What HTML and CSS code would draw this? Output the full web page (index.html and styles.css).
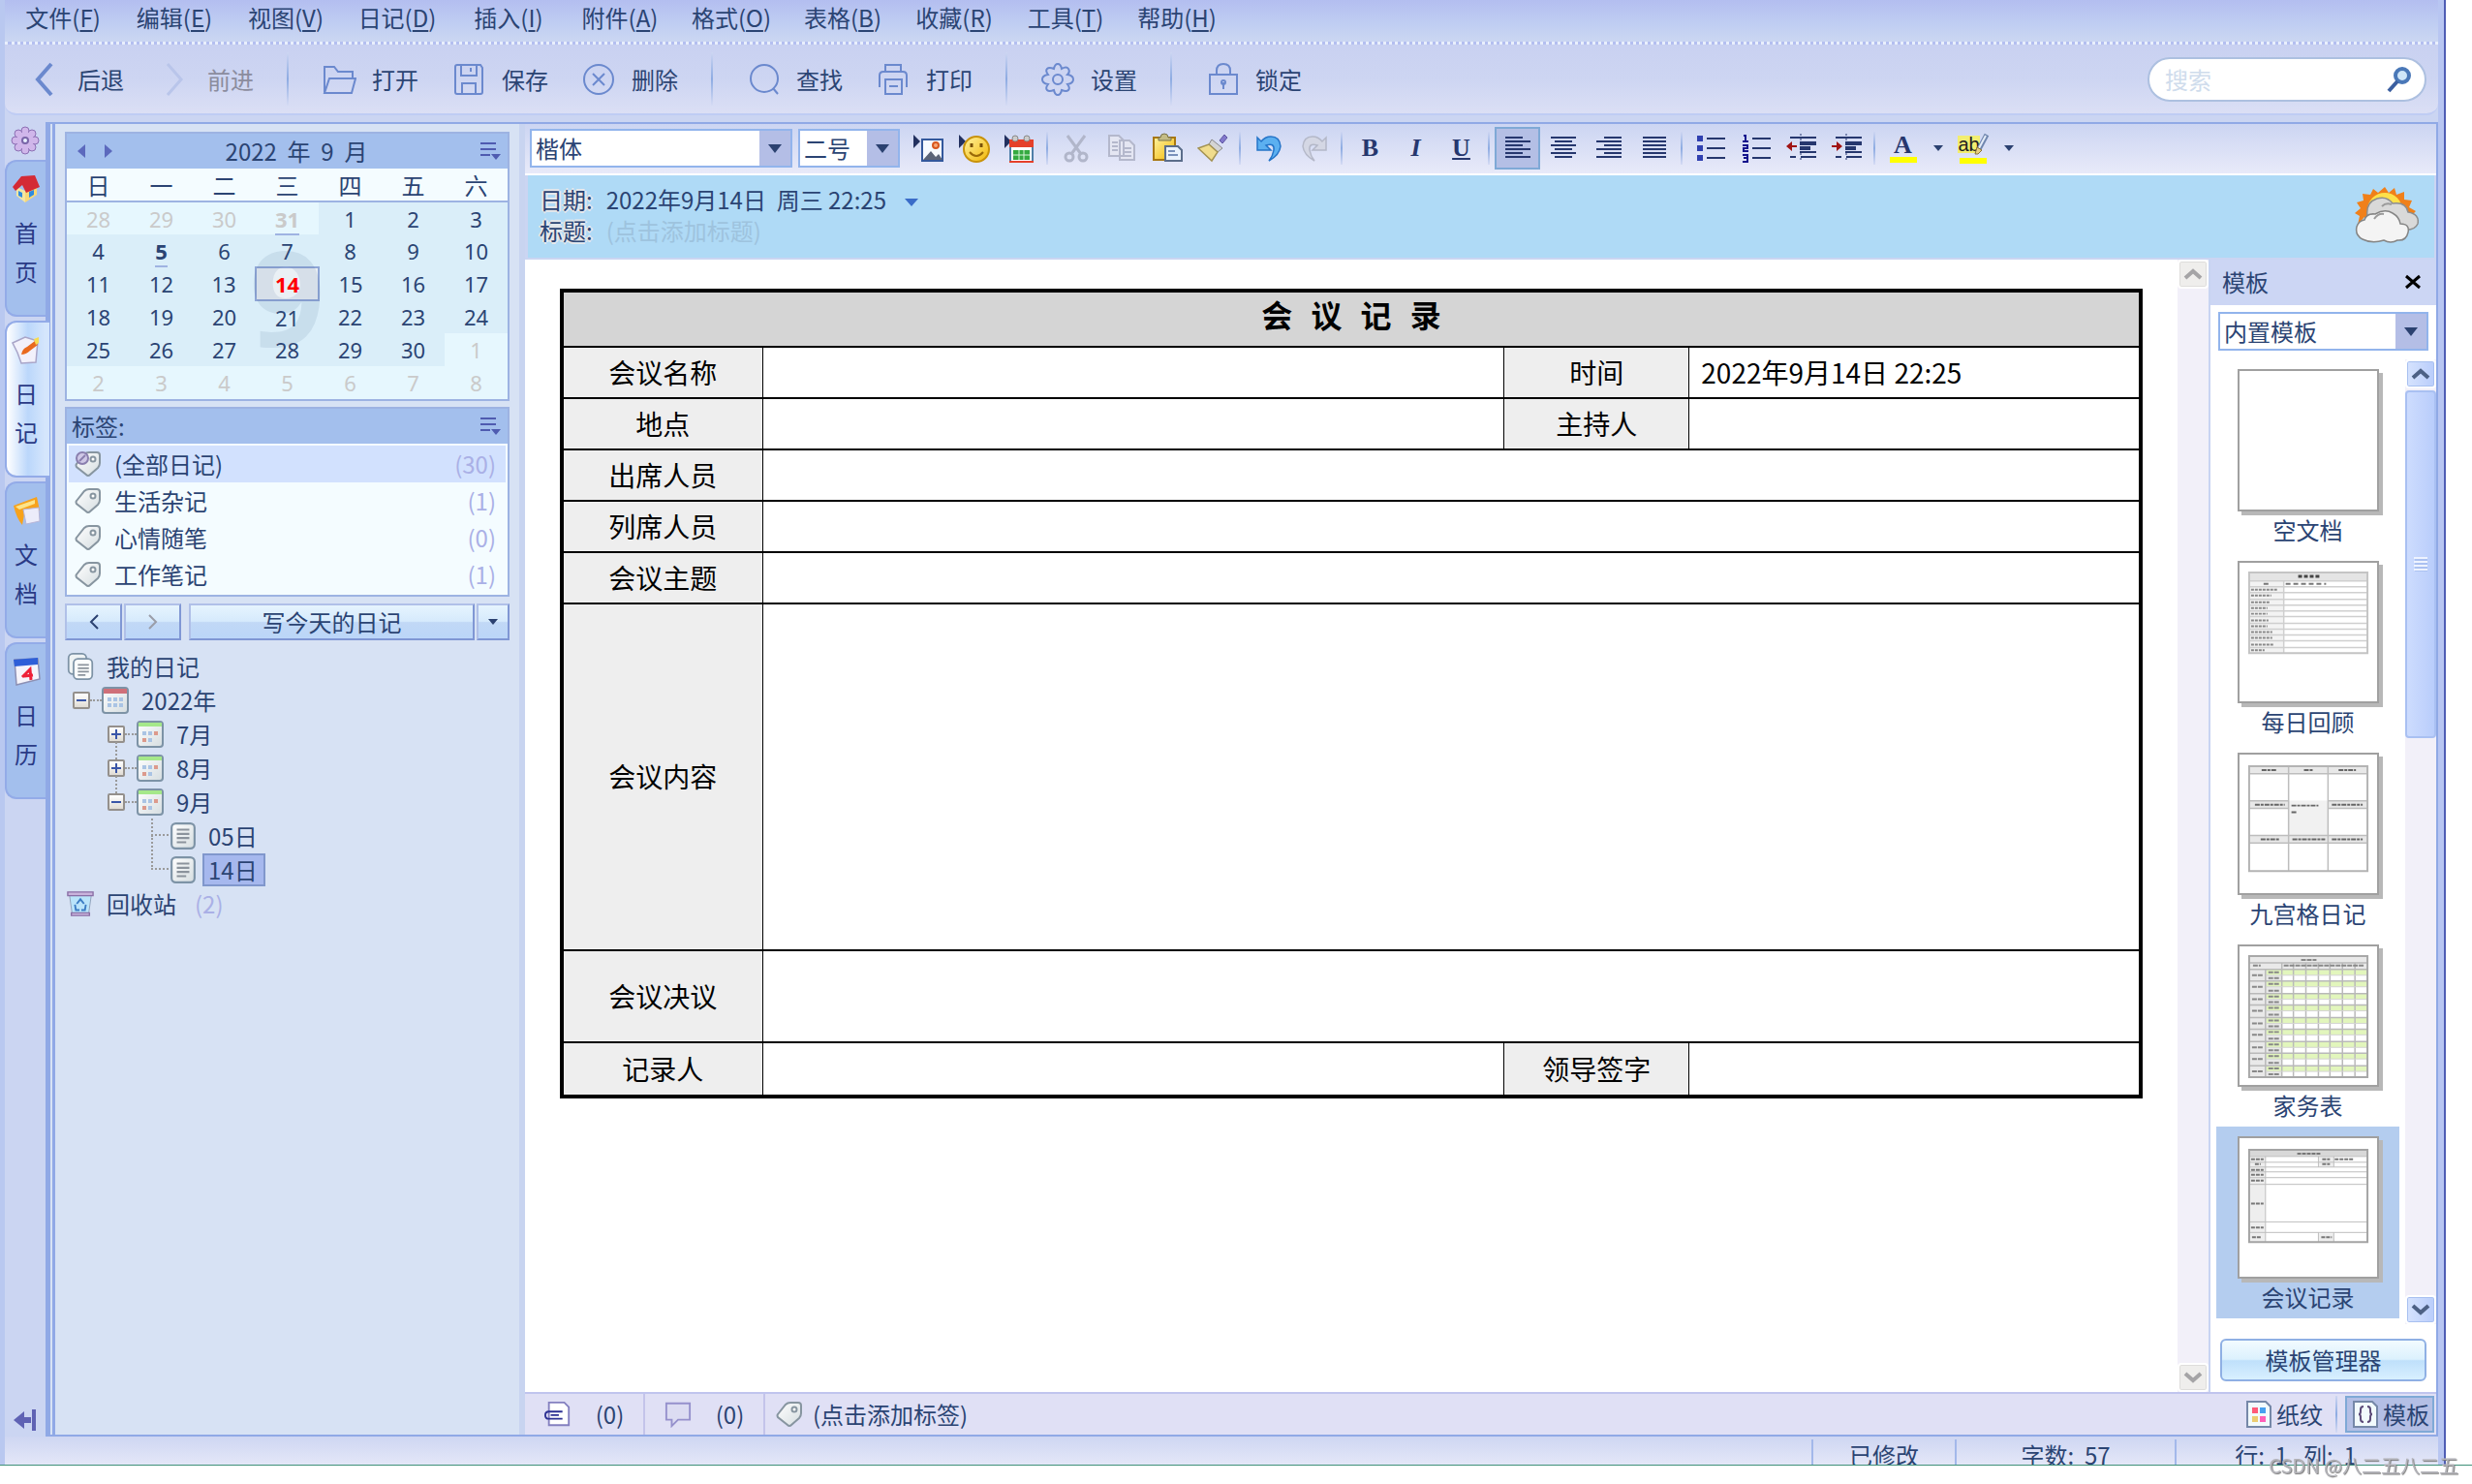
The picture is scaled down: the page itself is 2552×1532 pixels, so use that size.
FILE: index.html
```html
<!DOCTYPE html>
<html lang="zh-CN">
<head>
  <meta charset="UTF-8" />
  <meta name="viewport" content="width=device-width, initial-scale=1" />
  <title>日记 - 会议记录</title>
  <link rel="stylesheet" href="styles.css">
</head>
<body>
  <!-- shared icons -->
  <svg class="defs" aria-hidden="true">
    <defs>
      <linearGradient id="paper" x1="0" y1="0" x2="1" y2="1">
        <stop offset="0" stop-color="#ffffff" /><stop offset="1" stop-color="#d5dde0" />
      </linearGradient>
      <linearGradient id="gold" x1="0" y1="0" x2="1" y2="1">
        <stop offset="0" stop-color="#fff3a0" /><stop offset="1" stop-color="#f2b705" />
      </linearGradient>
      <symbol id="i-tag" viewBox="0 0 28 28">
        <path d="M2 14 10 4Q12 2 15 2h8q3 0 3 3v8q0 3-2 5l-8 7q-2 2-4 0L2 17Q1 15 2 14z" fill="url(#paper)" stroke="#8795a0" stroke-width="2" />
        <circle cx="19" cy="9" r="2.500" fill="#fff" stroke="#8795a0" stroke-width="2" />
      </symbol>
      <symbol id="i-month" viewBox="0 0 28 28">
        <rect x="1" y="1" width="26" height="26" rx="3" fill="url(#paper)" stroke="#7d93a6" stroke-width="2" />
        <path d="M2 2h24v4H2z" fill="#a5e88a" />
        <path d="M6 11h4v4H6zM12 11h4v4h-4zM12 18h4v4h-4z" fill="#aac4e4" />
        <path d="M18 11h4v4h-4zM6 18h4v4H6z" fill="#dc9a8c" />
      </symbol>
      <symbol id="i-note" viewBox="0 0 24 26">
        <rect x="1" y="1" width="22" height="24" rx="4" fill="url(#paper)" stroke="#7d93a6" stroke-width="2" />
        <path d="M6 7h12M6 11h12M6 15h12M6 19h9" stroke="#8b939c" stroke-width="2" />
      </symbol>
      <symbol id="i-list" viewBox="0 0 24 20">
        <path d="M2 2h16M2 8h16M2 14h10" stroke="#4f5bb0" stroke-width="2" />
        <path d="M13 13h10l-5 6z" fill="#4f5bb0" />
      </symbol>
      <symbol id="i-up" viewBox="0 0 20 12">
        <path d="M2 10 10 3l8 7" fill="none" stroke="currentColor" stroke-width="4" />
      </symbol>
      <symbol id="i-down" viewBox="0 0 20 12">
        <path d="m2 2 8 7 8-7" fill="none" stroke="currentColor" stroke-width="4" />
      </symbol>
    </defs>
  </svg>

  <div class="app">
    <nav class="menubar">
      <button>文件(<u>F</u>)</button>
      <button>编辑(<u>E</u>)</button>
      <button>视图(<u>V</u>)</button>
      <button>日记(<u>D</u>)</button>
      <button>插入(<u>I</u>)</button>
      <button>附件(<u>A</u>)</button>
      <button>格式(<u>O</u>)</button>
      <button>表格(<u>B</u>)</button>
      <button>收藏(<u>R</u>)</button>
      <button>工具(<u>T</u>)</button>
      <button>帮助(<u>H</u>)</button>
    </nav>

    <div class="toolbar">
      <button class="tool">
        <svg viewBox="0 0 36 36"><path d="M25 2 11 18l14 16" stroke-width="4" /></svg>后退
      </button>
      <button class="tool" disabled>
        <svg viewBox="0 0 36 36"><path d="m11 2 14 16-14 16" stroke-width="3" /></svg>前进
      </button>
      <i class="sep"></i>
      <button class="tool">
        <svg viewBox="0 0 36 36"><path d="M3 32V5h10l4 5h15v7M3 32 8 17h27l-4 15z" /></svg>打开
      </button>
      <button class="tool">
        <svg viewBox="0 0 36 36"><path d="M4 5q0-2 2-2h24l2 3v25q0 2-2 2H6q-2 0-2-2zM10 3v11h16V3M11 33V22h14v11M20 6v4" /></svg>保存
      </button>
      <button class="tool">
        <svg viewBox="0 0 36 36"><circle cx="18" cy="18" r="15" /><path d="m12 12 12 12M24 12 12 24" /></svg>删除
      </button>
      <i class="sep"></i>
      <button class="tool">
        <svg viewBox="0 0 36 36"><circle cx="19" cy="17" r="14" /><path d="m28 27 5 6" /></svg>查找
      </button>
      <button class="tool">
        <svg viewBox="0 0 36 36"><path d="M10 10V3h16v7M4 26V14q0-4 4-4h20q4 0 4 4v12M10 18h17v15H10zM14 25h9" /></svg>打印
      </button>
      <i class="sep"></i>
      <button class="tool">
        <svg viewBox="0 0 36 36"><path d="M18 2q3 0 4 5 5-3 7 0t-1 6q6 1 6 5t-6 5q3 4 1 6t-7 0q-1 5-4 5t-4-5q-5 2-7 0t1-6q-6-1-6-5t6-5q-3-4-1-6t7 0q1-5 4-5z" /><circle cx="18" cy="18" r="5" /></svg>设置
      </button>
      <i class="sep"></i>
      <button class="tool">
        <svg viewBox="0 0 36 36"><path d="M12 13V9q0-7 7-7t7 7v4M5 13h28v20H5z" /><circle cx="19" cy="21" r="2" /><path d="M19 21v7" /></svg>锁定
      </button>
      <div class="search">
        <input type="text" placeholder="搜索" aria-label="搜索">
        <button aria-label="搜索"><svg viewBox="0 0 28 28"><circle cx="17" cy="10" r="7" fill="#cfe6f8" stroke="#4a78b8" stroke-width="4" /><path d="M12 16 3 26" stroke="#3b5fa0" stroke-width="4" /></svg></button>
      </div>
    </div>

    <div class="workspace">
      <nav class="rail">
        <button class="rail-gear" aria-label="选项">
          <svg viewBox="0 0 30 30"><g fill="#d0b6ea" stroke="#8c70b4" stroke-width="1"><circle cx="15" cy="5" r="4" /><circle cx="22" cy="8" r="4" /><circle cx="25" cy="15" r="4" /><circle cx="22" cy="22" r="4" /><circle cx="15" cy="25" r="4" /><circle cx="8" cy="22" r="4" /><circle cx="5" cy="15" r="4" /><circle cx="8" cy="8" r="4" /></g><circle cx="15" cy="15" r="9" fill="#d0b6ea" /><circle cx="15" cy="15" r="3" fill="#e8f0ff" stroke="#7a66a8" stroke-width="2" /></svg>
        </button>
        <button class="tab">
          <svg viewBox="0 0 30 30"><path d="m5 13 9 4v12L5 22z" fill="#f5e6a0" /><path d="m14 17 12-5v9l-12 8z" fill="#f8d878" /><path d="m7 17 4 2v5l-4-2zM18 18l5-2v5l-5 3z" fill="#2e8be0" /><path d="m1 13 9-11 14-1 5 12-14 6-4-8-7 6z" fill="#d42a35" /></svg>
          <span>首</span><span>页</span>
        </button>
        <button class="tab active">
          <svg viewBox="0 0 30 30"><path d="m1 8 13-6 13 4-2 22-15 1L6 18z" fill="#f2f1fb" stroke="#a9a5c8" stroke-width="1.500" /><path d="M10 20q1-6 6-8l8-6 3 4-8 6q-4 4-9 4z" fill="#e96a1e" /><path d="m23 4 5-2v6l-3 2z" fill="#f8dc50" /></svg>
          <span>日</span><span>记</span>
        </button>
        <button class="tab">
          <svg viewBox="0 0 30 30"><path d="M2 10 26 1l3 14-16 4-2 11q-6-7-9-20z" fill="#f7a21c" /><path d="m4 11 20-7v4L8 14z" fill="#fde48a" /><path d="m12 14 16-2 1 14-14 3z" fill="#ececfa" stroke="#b8b6d8" /></svg>
          <span>文</span><span>档</span>
        </button>
        <button class="tab">
          <svg viewBox="0 0 30 30"><path d="m3 3 24-1 2 21-24 6z" fill="#f6f4fb" stroke="#8c90b4" stroke-width="1.500" /><path d="m2 3 25-2v7L3 10z" fill="#2e5fd8" /><path d="m11 21 8-8 1 11M13 20l9-1" fill="none" stroke="#ee2038" stroke-width="3" /></svg>
          <span>日</span><span>历</span>
        </button>
        <button class="rail-hide" aria-label="隐藏">
          <svg viewBox="0 0 26 26"><path d="m1 13 11-9v6h7v6h-7v6zM20 2h4v22h-4z" fill="#5f62b4" /></svg>
        </button>
      </nav>

      <div class="main">
        <aside class="sidebar">
          <section class="calendar">
            <header>
              <button aria-label="上个月"><svg viewBox="0 0 12 16"><path d="M10 1v14L2 8z" fill="#5c69bd" /></svg></button>
              <button aria-label="下个月"><svg viewBox="0 0 12 16"><path d="M2 1v14l8-7z" fill="#5c69bd" /></svg></button>
              <h2>2022&nbsp; 年&nbsp; 9&nbsp; 月</h2>
              <button aria-label="菜单"><svg class="list" viewBox="0 0 24 20"><use href="#i-list" /></svg></button>
            </header>
            <div class="days">
              <table>
                <thead>
                  <tr><th>日</th><th>一</th><th>二</th><th>三</th><th>四</th><th>五</th><th>六</th></tr>
                </thead>
                <tbody>
                  <tr><td class="out">28</td><td class="out">29</td><td class="out">30</td><td class="out"><b>31</b></td><td>1</td><td>2</td><td>3</td></tr>
                  <tr><td>4</td><td><b>5</b></td><td>6</td><td>7</td><td>8</td><td>9</td><td>10</td></tr>
                  <tr><td>11</td><td>12</td><td>13</td><td class="today"><strong>14</strong></td><td>15</td><td>16</td><td>17</td></tr>
                  <tr><td>18</td><td>19</td><td>20</td><td>21</td><td>22</td><td>23</td><td>24</td></tr>
                  <tr><td>25</td><td>26</td><td>27</td><td>28</td><td>29</td><td>30</td><td class="out">1</td></tr>
                  <tr><td class="out">2</td><td class="out">3</td><td class="out">4</td><td class="out">5</td><td class="out">6</td><td class="out">7</td><td class="out">8</td></tr>
                </tbody>
              </table>
              <span class="month-mark">9</span>
            </div>
          </section>

          <section class="tags">
            <header>
              <h2>标签:</h2>
              <button aria-label="菜单"><svg class="list" viewBox="0 0 24 20"><use href="#i-list" /></svg></button>
            </header>
            <ul>
              <li class="selected"><svg viewBox="0 0 28 28"><use href="#i-tag" /><circle cx="8" cy="8" r="6" fill="#cfc8e6" stroke="#8a7fae" stroke-width="2" /><path d="m5 11 6-6" stroke="#8a7fae" stroke-width="2" /></svg>(全部日记)<em>(30)</em></li>
              <li><svg viewBox="0 0 28 28"><use href="#i-tag" /></svg>生活杂记<em>(1)</em></li>
              <li><svg viewBox="0 0 28 28"><use href="#i-tag" /></svg>心情随笔<em>(0)</em></li>
              <li><svg viewBox="0 0 28 28"><use href="#i-tag" /></svg>工作笔记<em>(1)</em></li>
            </ul>
          </section>

          <div class="write">
            <button class="nav" aria-label="前一篇"><svg viewBox="0 0 12 18"><path d="M10 2 3 9l7 7" stroke="#2b4170" /></svg></button>
            <button class="nav" aria-label="后一篇"><svg viewBox="0 0 12 18"><path d="m2 2 7 7-7 7" stroke="#9a9da8" /></svg></button>
            <button class="today-btn">写今天的日记</button>
            <button class="more" aria-label="更多"><i class="arrow"></i></button>
          </div>

          <ul class="tree">
            <li>
              <svg class="icon" viewBox="0 0 30 32"><rect x="1" y="1" width="21" height="24" rx="5" fill="#eef3f4" stroke="#7d93a6" stroke-width="2" /><rect x="7" y="7" width="22" height="24" rx="5" fill="#fafcfc" stroke="#7d93a6" stroke-width="2" /><path d="M12 14h13M12 18h13M12 22h13M12 26h9" stroke="#8b939c" stroke-width="2" /></svg>
              <span>我的日记</span>
            </li>
            <li class="year">
              <button class="toggle minus" aria-label="折叠"></button><i class="dots"></i>
              <svg class="icon" viewBox="0 0 28 28"><rect x="1" y="1" width="26" height="26" rx="3" fill="url(#paper)" stroke="#7d93a6" stroke-width="2" /><path d="M2 2h24v5H2z" fill="#cf7079" /><path d="M6 11h4v4H6zM12 11h4v4h-4zM18 11h4v4h-4zM6 17h4v4H6zM12 17h4v4h-4zM18 17h4v4h-4z" fill="#aac4e4" /></svg>
              <span>2022年</span>
            </li>
            <li class="month">
              <button class="toggle plus" aria-label="展开"></button><i class="dots"></i>
              <svg class="icon" viewBox="0 0 28 28"><use href="#i-month" /></svg>
              <span>7月</span>
            </li>
            <li class="month">
              <button class="toggle plus" aria-label="展开"></button><i class="dots"></i>
              <svg class="icon" viewBox="0 0 28 28"><use href="#i-month" /></svg>
              <span>8月</span>
            </li>
            <li class="month">
              <button class="toggle minus" aria-label="折叠"></button><i class="dots"></i>
              <svg class="icon" viewBox="0 0 28 28"><use href="#i-month" /></svg>
              <span>9月</span>
            </li>
            <li class="day">
              <i class="branch"></i>
              <svg class="icon" viewBox="0 0 24 26"><use href="#i-note" /></svg>
              <span>05日</span>
            </li>
            <li class="day last">
              <i class="branch"></i>
              <svg class="icon" viewBox="0 0 24 26"><use href="#i-note" /></svg>
              <span class="picked">14日</span>
            </li>
            <li>
              <svg class="icon" viewBox="0 0 30 28"><path d="M3 5h24l-3 21H6z" fill="#b9e4fa" stroke="#8f9fb8" stroke-width="1" /><path d="M1 1h28v4H1zM5 24h20v3H5z" fill="#c9b4dc" stroke="#8a6fa6" stroke-width="1.500" /><path d="m11 14 4-5 4 5M9 15l1 6h4M21 15l-1 6h-4" fill="none" stroke="#3a7cc4" stroke-width="2" /></svg>
              <span>回收站</span><em>(2)</em>
            </li>
          </ul>
        </aside>

        <section class="content">
          <div class="format">
            <div class="combo font-name">
              <select aria-label="字体"><option>楷体</option></select>
            </div>
            <div class="combo font-size">
              <select aria-label="字号"><option>二号</option></select>
            </div>
            <div class="format-buttons">
              <button aria-label="插入图片"><svg viewBox="0 0 32 32"><path d="M0 2v14l7-7z" fill="#22305f" /><path d="M9 7h21v22H9z" fill="#f6faff" stroke="#33589c" stroke-width="2" /><circle cx="23" cy="13" r="3" fill="#f6a878" stroke="#d8571e" stroke-width="2" /><path d="m10 28 8-9 5 6 3-3 4 6z" fill="#5a6478" /></svg></button>
              <button aria-label="插入表情"><svg viewBox="0 0 32 32"><path d="M0 2v14l7-7z" fill="#22305f" /><circle cx="18" cy="17" r="13" fill="url(#gold)" stroke="#c8920a" stroke-width="2" /><path d="M11 20q7 8 14 0" fill="none" stroke="#9a6a08" stroke-width="2" /><path d="M13 11v4M23 11v4" stroke="#7a5208" stroke-width="3" /></svg></button>
              <button aria-label="插入日期"><svg viewBox="0 0 32 32"><path d="M0 2v14l7-7z" fill="#22305f" /><path d="M6 8h23v22H6z" fill="#fff" stroke="#4f7fa8" stroke-width="2" /><path d="M5 7h25v8H5zM5 29h25v2H5z" fill="#e5402a" /><path d="M9 18h17v10H9z" fill="#35aa40" /><path d="M9 23h17M15 18v10M20 18v10" stroke="#d8f4d8" stroke-width="1" /><circle cx="11" cy="6" r="3" fill="#ccc" stroke="#888" /><circle cx="23" cy="6" r="3" fill="#ccc" stroke="#888" /></svg></button>
              <i class="sep"></i>
              <button disabled aria-label="剪切"><svg viewBox="0 0 32 32"><g fill="none" stroke="#b1b6ca" stroke-width="3"><path d="m7 3 14 19M25 3 11 22" /><circle cx="9" cy="25" r="4" /><circle cx="23" cy="25" r="4" /></g></svg></button>
              <button disabled aria-label="复制"><svg viewBox="0 0 32 32"><g fill="#e4e6f2" stroke="#b4b8cc" stroke-width="2"><path d="M3 3h10l5 5v16H3zM14 8h10l5 5v15H14z" /><path d="M6 10h6M6 14h6M6 18h6M17 16h9M17 20h9M17 24h9" /></g></svg></button>
              <button aria-label="粘贴"><svg viewBox="0 0 32 32"><path d="M2 5h22v23H2z" fill="url(#gold)" stroke="#a87812" stroke-width="2" /><path d="M7 8h13V5h-3q0-4-4-4T9 5H7z" fill="#c4bc84" stroke="#79734a" /><path d="M14 14h13l4 4v11H14z" fill="#eaf2fc" stroke="#5b6d8a" stroke-width="2" /><path d="M17 19h7M17 23h10" stroke="#7a92ba" stroke-width="2" /></svg></button>
              <button aria-label="格式刷"><svg viewBox="0 0 32 32"><path d="m23 8 5-6 3 3-5 6z" fill="#8278cc" stroke="#5d55a0" /><path d="m15 7 11 9-5 4-9-8z" fill="#d4d4d4" stroke="#888" /><path d="m12 12 9 8-6 9L1 16z" fill="#f0dc8c" stroke="#a39252" stroke-width="1.500" /></svg></button>
              <i class="sep"></i>
              <button aria-label="撤消"><svg viewBox="0 0 32 32"><path d="M4 5v13h14l-5-5q9-3 8 5-1 6-5 11 11-6 12-15Q27 4 18 4q-6 0-10 5z" fill="#5cb0f0" stroke="#2474c8" stroke-width="1.500" /></svg></button>
              <button disabled aria-label="恢复"><svg viewBox="0 0 32 32"><path d="M28 5v13H14l5-5q-9-3-8 5 1 6 5 11Q5 23 4 14 5 4 14 4q6 0 10 5z" fill="#d4d7e4" stroke="#b4b8c8" stroke-width="1.500" /></svg></button>
              <i class="sep"></i>
              <button class="glyph" aria-label="加粗"><b>B</b></button>
              <button class="glyph" aria-label="倾斜"><i>I</i></button>
              <button class="glyph" aria-label="下划线"><u>U</u></button>
              <i class="sep"></i>
              <button class="on" aria-label="左对齐"><svg viewBox="0 0 32 32"><path d="M3 5h18M3 9h26M3 13h18M3 17h26M3 21h18M3 25h26" class="bars" /></svg></button>
              <button aria-label="居中"><svg viewBox="0 0 32 32"><path d="M3 5h26M7 9h18M3 13h26M7 17h18M3 21h26M7 25h18" class="bars" /></svg></button>
              <button aria-label="右对齐"><svg viewBox="0 0 32 32"><path d="M11 5h18M3 9h26M11 13h18M3 17h26M11 21h18M3 25h26" class="bars" /></svg></button>
              <button aria-label="两端对齐"><svg viewBox="0 0 32 32"><path d="M4 5h24M4 9h24M4 13h24M4 17h24M4 21h24M4 25h24" class="bars" /></svg></button>
              <i class="sep"></i>
              <button aria-label="项目符号"><svg viewBox="0 0 32 32"><path d="M12 6h19M12 16h19M12 26h19" class="bars" /><path d="M2 3h6v6H2zM2 13h6v6H2zM2 23h6v6H2z" fill="#3040b0" /></svg></button>
              <button aria-label="编号"><svg viewBox="0 0 32 32"><path d="M12 6h19M12 16h19M12 26h19" class="bars" /><path d="M3 3h2v6M2 9h6M2 13h5v3H3v3h5M2 23h5v7H2M3 26h4" fill="none" stroke="#14148c" stroke-width="2" /></svg></button>
              <button aria-label="减少缩进"><svg viewBox="0 0 32 32"><path d="M4 5h27M15 25h16M4 25h6M14 10h17M14 15h11M14 20h17" class="bars" /><path d="M14 9h17v4H14zM14 15h11v3H14z" fill="#26376e" /><path d="M15 1v30" stroke="#26376e" stroke-width="1" stroke-dasharray="2 3" /><path d="m0 14 6-5v4h5v2H6v4z" fill="#a01414" /></svg></button>
              <button aria-label="增加缩进"><svg viewBox="0 0 32 32"><path d="M4 5h27M15 25h16M4 25h6M14 10h17M14 15h11M14 20h17" class="bars" /><path d="M14 9h17v4H14zM14 15h11v3H14z" fill="#26376e" /><path d="M15 1v30" stroke="#26376e" stroke-width="1" stroke-dasharray="2 3" /><path d="m11 14-6-5v4H0v2h5v4z" fill="#a01414" /></svg></button>
              <i class="sep"></i>
              <button class="glyph color" aria-label="字体颜色"><span>A</span></button>
              <button class="drop" aria-label="更多颜色"><i class="arrow"></i></button>
              <button class="glyph mark" aria-label="突出显示"><span>ab</span><svg viewBox="0 0 16 24"><path d="m13 2-8 15" stroke="#6f86ae" stroke-width="5" /><path d="m12 3-7 13" stroke="#e4ecf8" stroke-width="2" /><path d="m3 15 5 3-4 4H1z" fill="#e8d080" stroke="#8a7434" /></svg></button>
              <button class="drop" aria-label="更多突出显示"><i class="arrow"></i></button>
            </div>
          </div>

          <div class="info">
            <dl>
              <dt>日期:</dt>
              <dd>2022年9月14日&nbsp; 周三 22:25 <i class="arrow"></i></dd>
              <dt>标题:</dt>
              <dd class="hint">(点击添加标题)</dd>
            </dl>
            <svg class="weather" viewBox="0 0 66 58">
              <path d="m31 0 4 6 6-5 2 7 8-3v8l8 1-3 7 7 4-6 6H10l-7 8 2-9-5-3 6-5-4-6 7-2-1-7 8 1 3-6 5 4z" fill="#f0801a" />
              <circle cx="31" cy="24" r="18" fill="#fde04a" />
              <path d="M13 30q-2-14 10-18 10-3 16 5 14-2 16 9 12 2 10 12-3 7-14 6H16z" fill="#d9d9d9" stroke="#8d8d8d" stroke-width="1.500" />
              <path d="M8 54q-8-4-6-13 2-6 8-7 2-7 11-6 10-6 18-1 7 4 8 11 10 0 8 9-2 9-11 8-7 4-14 0-12 4-22-1z" fill="#f4f4f4" stroke="#858585" stroke-width="1.500" />
              <path d="M20 33q4-6 10-5M28 20q4-4 10-2" fill="none" stroke="#9a9a9a" stroke-width="2" />
            </svg>
          </div>

          <div class="body">
            <div class="page">
              <table class="minutes">
                <colgroup><col class="c-label"><col><col class="c-mid"><col class="c-value"></colgroup>
                <tbody>
                  <tr class="title"><th colspan="4">会 议 记 录</th></tr>
                  <tr><th>会议名称</th><td></td><th>时间</th><td>2022年9月14日 22:25</td></tr>
                  <tr><th>地点</th><td></td><th>主持人</th><td></td></tr>
                  <tr><th>出席人员</th><td colspan="3"></td></tr>
                  <tr><th>列席人员</th><td colspan="3"></td></tr>
                  <tr><th>会议主题</th><td colspan="3"></td></tr>
                  <tr class="tall"><th>会议内容</th><td colspan="3"></td></tr>
                  <tr class="decision"><th>会议决议</th><td colspan="3"></td></tr>
                  <tr class="sign"><th>记录人</th><td></td><th>领导签字</th><td></td></tr>
                </tbody>
              </table>
            </div>
            <div class="scroll gray">
              <button aria-label="向上滚动"><svg viewBox="0 0 20 12"><use href="#i-up" /></svg></button>
              <button aria-label="向下滚动"><svg viewBox="0 0 20 12"><use href="#i-down" /></svg></button>
            </div>

            <aside class="templates">
              <header><h2>模板</h2><button aria-label="关闭"><svg viewBox="0 0 18 16"><path d="m2 2 14 12M16 2 2 14" stroke="#000" stroke-width="3" /></svg></button></header>
              <div class="combo tpl-source">
                <select aria-label="模板来源"><option>内置模板</option></select>
              </div>
              <div class="tpl-area">
                <div class="tpl-list">
                  <figure><div class="thumb"></div><figcaption>空文档</figcaption></figure>
                  <figure>
                    <div class="thumb"><svg viewBox="0 0 143 143">
                      <path d="M10 10h123v9H10z" fill="#e4e4e4" /><path d="M10 19h36v75H10z" fill="#f3f3f3" />
                      <path d="M10 19h123M10 25h123M10 31h123M10 38h123M10 44h123M10 50h123M10 56h123M10 63h123M10 69h123M10 75h123M10 81h123M10 88h123M46 19v75" stroke="#cfcfcf" stroke-width="1.500" />
                      <path d="M10 10h123v84H10z" fill="none" stroke="#c4c4c4" stroke-width="2" />
                      <path d="M61 14h24" stroke="#444" stroke-width="3" stroke-dasharray="4 2" />
                      <path d="M25 22h7M48 22h42" stroke="#777" stroke-width="2" stroke-dasharray="5 3" />
                      <path d="M12 28h27M12 34h21M12 41h20M12 47h17M12 53h17M12 60h18M12 66h17M12 72h22M12 78h22M12 85h24M12 91h14" stroke="#888" stroke-width="2" stroke-dasharray="3 1" />
                    </svg></div><figcaption>每日回顾</figcaption>
                  </figure>
                  <figure>
                    <div class="thumb"><svg viewBox="0 0 143 143">
                      <path d="M10 12h123v8H10zM10 48h123v8H10zM10 84h123v8H10z" fill="#e8e8e8" /><path d="M51 48h41v36H51z" fill="#f1f1f1" />
                      <path d="M10 20h123M10 48h41M10 56h41M92 48h41M92 56h41M10 84h123M10 92h123M51 12v109M92 12v109" stroke="#bdbdbd" stroke-width="1.500" />
                      <path d="M10 12h123v109H10z" fill="none" stroke="#b4b4b4" stroke-width="2" />
                      <path d="M23 16h15M67 16h9M103 16h18M16 52h31M96 52h32M54 53h28M54 60h6M22 88h20M55 88h34M96 88h32" stroke="#666" stroke-width="2" stroke-dasharray="5 1 3 1" />
                    </svg></div><figcaption>九宫格日记</figcaption>
                  </figure>
                  <figure>
                    <div class="thumb"><svg viewBox="0 0 143 143">
                      <path d="M10 10h123v126H10z" fill="#fff" /><path d="M10 10h123v14H10zM10 10h34v126H10z" fill="#e9e9e9" />
                      <path d="M28 27h105M28 39h105M28 52h105M28 64h105M28 77h105M28 89h105M28 102h105M28 114h105M28 127h105" stroke="#e2f6bc" stroke-width="6" />
                      <path d="M10 17h123M10 24h123M10 36h123M10 49h123M10 61h123M10 74h123M10 86h123M10 99h123M10 111h123M10 124h123M27 24v112M44 17v119M56 17v119M69 17v119M82 17v119M94 17v119M107 17v119M120 17v119" stroke="#b9b9b9" stroke-width="1.500" />
                      <path d="M28 30h105M28 42h105M28 55h105M28 67h105M28 80h105M28 92h105M28 105h105M28 117h105M28 130h105" stroke="#d4d4d4" />
                      <path d="M10 10h123v126H10z" fill="none" stroke="#a8a8a8" stroke-width="2" />
                      <path d="M64 14h16M14 20h8M46 20h84M13 30h11M13 42h11M13 55h11M13 67h11M13 80h11M13 92h11M13 105h11M13 117h11M13 130h11M30 27h11M30 33h11M30 39h11M30 46h11M30 52h11M30 58h11M30 64h11M30 71h11M30 77h11M30 83h11M30 89h11M30 96h11M30 102h11M30 108h11M30 114h11M30 121h11M30 127h11M30 133h11" stroke="#888" stroke-width="2" stroke-dasharray="5 1" />
                    </svg></div><figcaption>家务表</figcaption>
                  </figure>
                  <figure class="selected">
                    <div class="thumb"><svg viewBox="0 0 143 143">
                      <path d="M10 12h123v7H10z" fill="#d8d8d8" /><path d="M10 19h17v89H10zM82 19h16v11H82zM82 99h16v9H82z" fill="#eee" />
                      <path d="M10 19h123M10 25h123M10 30h123M10 35h123M10 41h123M10 48h123M10 87h123M10 98h123M27 19v89M82 19v11M98 19v11M82 98v10M98 98v10" stroke="#bdbdbd" />
                      <path d="M10 12h123v96H10z" fill="none" stroke="#a4a4a4" stroke-width="2" />
                      <path d="M60 16h24M12 22h13M16 27h6M12 33h13M12 38h13M12 44h13M12 68h13M12 93h13M13 103h10M86 22h8M99 22h20M86 27h8M85 103h11" stroke="#777" stroke-width="2" stroke-dasharray="4 1" />
                    </svg></div><figcaption>会议记录</figcaption>
                  </figure>
                </div>
                <div class="scroll">
                  <button aria-label="向上滚动"><svg viewBox="0 0 20 12"><use href="#i-up" /></svg></button>
                  <div class="handle"><svg viewBox="0 0 14 16"><path d="M0 2h14M0 6h14M0 10h14M0 14h14" stroke="#eef3ff" stroke-width="2" /><path d="M1 4h13M1 8h13M1 12h13M1 16h13" stroke="#93aee6" stroke-width="1" /></svg></div>
                  <button aria-label="向下滚动"><svg viewBox="0 0 20 12"><use href="#i-down" /></svg></button>
                </div>
              </div>
              <button class="manager">模板管理器</button>
            </aside>
          </div>

          <div class="bottombar">
            <button class="attach"><svg viewBox="0 0 30 28"><path d="M5 1h17l5 5v20H5z" fill="#fff" stroke="#8480c0" stroke-width="2" /><path d="M20 11H5q-4 0-4 4t4 4h15M7 15h9" fill="none" stroke="#2b2f92" stroke-width="2" /></svg>(0)</button>
            <button class="comment"><svg viewBox="0 0 30 28"><path d="M2 2h26v18H15l-7 7v-7H2z" fill="#dcdcf2" stroke="#9590cc" stroke-width="2" /></svg>(0)</button>
            <button class="add-tag"><svg viewBox="0 0 28 28"><use href="#i-tag" /></svg>(点击添加标签)</button>
            <button class="pane"><svg viewBox="0 0 26 28"><path d="M1 1h19l5 5v21H1z" fill="#f2fafc" stroke="#7688a8" stroke-width="2" /><path d="M6 7h6v6H6z" fill="#ff5a78" /><path d="M14 7h6v6h-6z" fill="#48a0f0" /><path d="M6 16h6v6H6z" fill="#eccc70" /><path d="M14 16h6v6h-6z" fill="#ff60b8" /></svg>纸纹</button>
            <i class="sep"></i>
            <button class="pane on"><svg viewBox="0 0 26 28"><path d="M1 1h19l5 5v21H1z" fill="#f2fafc" stroke="#7688a8" stroke-width="2" /><path d="M11 6q-3 0-3 3v2q0 3-2 3 2 0 2 3v2q0 3 3 3M15 6q3 0 3 3v2q0 3 2 3-2 0-2 3v2q0 3-3 3" fill="none" stroke="#5c4a78" stroke-width="2" /></svg>模板</button>
          </div>
        </section>
      </div>
    </div>

    <footer class="status">
      <span class="st-state">已修改</span>
      <span class="st-words">字数:&nbsp; 57</span>
      <span class="st-pos">行:&nbsp; 1&nbsp;&nbsp; 列:&nbsp; 1</span>
    </footer>
  </div>
  <div class="watermark">CSDN @八二五八二五</div>
</body>
</html>
```
FILE: styles.css
```css
* {
  box-sizing: border-box;
}

html, body {
  height: 100%;
}

body {
  margin: 0;
  background: #fff;
  font-family: "Noto Sans CJK SC", sans-serif;
  font-size: 24px;
  line-height: 32px;
  color: #2b4473;
  overflow: hidden;
}

button, input, select {
  font: inherit;
  color: inherit;
}

button {
  display: flex;
  align-items: center;
  justify-content: center;
  padding: 0;
  border: 0;
  background: none;
  white-space: nowrap;
}

svg {
  display: block;
  flex: none;
}

h2, ul, dl, dd, figure {
  margin: 0;
  padding: 0;
  font-size: 24px;
  font-weight: normal;
}

ul {
  list-style: none;
}

em {
  font-style: normal;
}

.defs {
  position: absolute;
  width: 0;
  height: 0;
}

.app {
  display: flex;
  flex-direction: column;
  height: calc(100vh - 20px);
  margin-right: 27px;
  padding-right: 6px;
  border-left: 5px solid #b9c8f0;
  border-right: 2px solid #4f5db4;
  background: #cbd5f2;
  box-shadow: inset -6px 0 #b8c6f2;
}

.sep {
  width: 2px;
  background: linear-gradient(to bottom, #cdd6f2, #8dabe2, #d5dbf4);
  align-self: stretch;
}

.arrow {
  display: inline-block;
  border: 7px solid transparent;
  border-top: 8px solid #2b4170;
  border-bottom: 0;
}

/* menu and main toolbar */
.menubar {
  display: flex;
  flex: none;
  gap: 35px;
  height: 46px;
  padding: 0 20px 7px;
  background: linear-gradient(to bottom, #b3bef0, #bfcdf2 55%, #cbd7f2);
  border-bottom: 3px dotted #e9effc;
}

.menubar button {
  width: 80px;
}

.menubar u {
  text-underline-offset: 3px;
}

.toolbar {
  display: flex;
  flex: none;
  align-items: center;
  gap: 34px;
  height: 73px;
  padding: 0 12px 0 23px;
  background: linear-gradient(to bottom, #c9d1f1, #cdd5f2 50%, #dbdff5);
  border-bottom: 2px solid #bfccf4;
  border-radius: 0 0 12px 12px;
}

.tool {
  gap: 16px;
}

.tool svg {
  width: 36px;
  height: 36px;
  fill: none;
  stroke: #6b89ce;
  stroke-width: 2;
}

.tool:disabled {
  color: #8b8c9e;
}

.tool:disabled svg {
  stroke: #b9c5ea;
}

.toolbar .sep {
  margin: 8px 0;
}

.search {
  display: flex;
  align-items: center;
  width: 288px;
  height: 46px;
  margin-left: auto;
  padding: 0 12px 0 16px;
  background: #fff;
  border: 2px solid #adc0e0;
  border-radius: 23px;
}

.search input {
  flex: 1;
  min-width: 0;
  padding: 0;
  border: 0;
  background: none;
}

.search input::placeholder {
  color: #cfdcec;
}

.search svg {
  width: 28px;
  height: 28px;
}

/* left rail */
.workspace {
  display: flex;
  flex: 1;
  min-height: 0;
  margin-top: 7px;
}

.rail {
  display: flex;
  flex-direction: column;
  width: 42px;
  gap: 4px;
  color: #2a3a86;
}

.rail svg {
  width: 30px;
  height: 30px;
}

.rail-gear {
  height: 35px;
  padding-top: 3px;
}

.tab {
  flex-direction: column;
  justify-content: flex-start;
  gap: 8px;
  height: 162px;
  padding-top: 13px;
  background: #a3bfed;
  border: 2px solid #93abe8;
  border-right: 0;
  border-radius: 12px 0 0 12px;
}

.tab svg {
  margin-bottom: 6px;
}

.tab.active {
  z-index: 1;
  margin-right: -4px;
  padding-right: 4px;
  background: linear-gradient(to right, #fff, #bbd7fb 50%, #d5e6fc 90%);
}

.rail-hide {
  height: 26px;
  margin-top: auto;
  margin-bottom: 4px;
}

.rail-hide svg {
  width: 26px;
  height: 26px;
}

.main {
  display: flex;
  flex: 1;
  min-width: 0;
  border: 2px solid #90a9e6;
}

/* sidebar */
.sidebar {
  display: flex;
  flex-direction: column;
  flex: none;
  width: 493px;
  padding: 8px 10px 0;
  background: #d7e2f4;
  border-left: 8px double #90a9e6;
  border-right: 6px solid #c8d4f0;
}

.sidebar header {
  display: flex;
  align-items: center;
  height: 36px;
  background: #a3bfed;
}

.sidebar h2 {
  flex: 1;
}

.list {
  width: 24px;
  height: 20px;
}

.calendar, .tags {
  border: 2px solid #9db3e2;
  background: #f4fcff;
}

.calendar header {
  gap: 16px;
  padding: 0 6px 0 9px;
}

.calendar header h2 {
  text-align: center;
}

.calendar header svg:not(.list) {
  width: 12px;
  height: 16px;
}

.days {
  position: relative;
}

.days table {
  width: 100%;
  border-collapse: collapse;
  table-layout: fixed;
}

.days th {
  height: 34px;
  padding: 0;
  border-bottom: 2px solid #9db3e2;
  font-weight: normal;
}

.days td {
  height: 34px;
  padding: 0;
  background: #daeef9;
  text-align: center;
  font-family: "Noto Sans", sans-serif;
  font-size: 22px;
  line-height: 28px;
}

.days td.out {
  background: #e6f7fe;
  color: #cacaca;
}

.days b {
  border-bottom: 2px solid #9fb3e2;
}

.days td.today {
  background: #eaf0f5;
  border: 2px solid #8fa6d6;
  color: #f00;
}

.month-mark {
  position: absolute;
  top: 64px;
  left: 50%;
  width: 80px;
  margin-left: -40px;
  text-align: center;
  font: bold 136px/136px "Noto Sans", sans-serif;
  color: rgba(70, 110, 150, 0.12);
  pointer-events: none;
}

.tags {
  margin-top: 6px;
}

.tags header {
  padding: 0 6px 0 5px;
}

.tags ul {
  padding: 2px;
}

.tags li {
  display: flex;
  align-items: center;
  gap: 13px;
  height: 38px;
  padding: 0 10px 0 6px;
}

.tags li.selected {
  background: #d2e1fe;
}

.tags svg:not(.list) {
  width: 28px;
  height: 28px;
}

.tags em {
  margin-left: auto;
}

.sidebar em {
  color: #aab0e6;
}

.write {
  display: flex;
  gap: 2px;
  margin-top: 7px;
}

.write button {
  height: 38px;
  background: linear-gradient(to bottom, #e6f4fe, #d6eafc 48%, #c1d8f6 52%, #bbd6f8);
  border: 2px solid #8097d4;
  border-top-color: #b0c0e8;
  border-left-color: #b0c0e8;
}

.write .nav {
  width: 59px;
}

.write .nav svg {
  width: 12px;
  height: 18px;
  fill: none;
  stroke-width: 2;
}

.write .today-btn {
  flex: 1;
  margin-left: 6px;
}

.write .more {
  width: 34px;
}

.more .arrow {
  border-width: 5px;
  border-top-width: 6px;
  border-bottom-width: 0;
}

.tree {
  margin-top: 9px;
}

.tree li {
  position: relative;
  display: flex;
  align-items: center;
  height: 35px;
  padding-left: 2px;
}

.tree .icon {
  width: 28px;
  height: 28px;
}

.tree span {
  margin-left: 13px;
}

.tree em {
  margin-left: 19px;
}

.tree li.year {
  padding-left: 8px;
}

.tree li.month {
  padding-left: 44px;
}

.tree li.day {
  padding-left: 109px;
}

.tree li.day .icon {
  width: 26px;
}

.tree li.month + li.month::before {
  content: "";
  position: absolute;
  left: 52px;
  top: -9px;
  height: 18px;
  border-left: 2px dotted #9a9a9a;
}

.dots {
  width: 12px;
  border-top: 2px dotted #9a9a9a;
}

.branch {
  position: absolute;
  left: 89px;
  top: 0;
  width: 18px;
  height: 18px;
  border-left: 2px dotted #9a9a9a;
  border-bottom: 2px dotted #9a9a9a;
}

.day.last .branch {
  top: -18px;
  height: 36px;
}

.toggle {
  position: relative;
  width: 18px;
  height: 18px;
  background: linear-gradient(to bottom, #fff, #e0dcd4);
  border: 2px solid #94908c;
  border-radius: 2px;
}

.toggle::before, .toggle.plus::after {
  content: "";
  position: absolute;
  left: 2px;
  top: 6px;
  width: 10px;
  height: 2px;
  background: #3a56a8;
}

.toggle.plus::after {
  left: 6px;
  top: 2px;
  width: 2px;
  height: 10px;
}

.tree .picked {
  margin-left: 7px;
  padding: 0 6px 0 4px;
  background: #a6b8ee;
  border: 2px solid #8097cc;
  line-height: 30px;
}

/* editor column */
.content {
  display: flex;
  flex-direction: column;
  flex: 1;
  min-width: 0;
}

.combo {
  position: relative;
}

.combo select {
  display: block;
  width: 100%;
  height: 40px;
  padding: 0 36px 0 4px;
  background: #fff linear-gradient(#b4bee6, #b4bee6) no-repeat right / 32px 100%;
  border: 2px solid #92b4ec;
  border-radius: 0;
  appearance: none;
}

.combo::after {
  content: "";
  position: absolute;
  right: 11px;
  top: 16px;
  border: 7px solid transparent;
  border-top: 9px solid #2b4170;
  border-bottom: 0;
  pointer-events: none;
}

.format {
  display: flex;
  align-items: center;
  flex: none;
  gap: 6px;
  height: 53px;
  padding: 0 5px 2px;
  background: linear-gradient(to bottom, #ccd5f2, #e8eaf9);
  border-bottom: 2px solid #fff;
}

.font-name {
  width: 271px;
}

.font-size {
  width: 105px;
}

.format-buttons {
  display: flex;
  align-items: center;
}

.format-buttons button {
  width: 47px;
  height: 44px;
}

.format-buttons svg {
  width: 32px;
  height: 32px;
}

.format-buttons .sep {
  height: 34px;
  margin: 0 5px 0 4px;
  align-self: center;
}

.format-buttons .on, .pane.on {
  background: #b4bfe5;
  border: 2px solid #7fa9d6;
}

.format-buttons .drop {
  width: 26px;
}

.drop .arrow {
  border-width: 5px;
  border-top-width: 6px;
  border-bottom-width: 0;
}

.bars {
  stroke: #26376e;
  stroke-width: 2;
}

.glyph {
  font-family: "Liberation Serif", serif;
  font-size: 26px;
  font-weight: bold;
  color: #26376e;
}

.color span {
  width: 28px;
  border-bottom: 6px solid #ff0;
  line-height: 24px;
}

.mark span {
  font: 20px/18px "Liberation Sans", sans-serif;
  color: #222;
  background: #f2ee70;
}

.mark {
  position: relative;
  padding-bottom: 8px;
}

.mark::after {
  content: "";
  position: absolute;
  left: 9px;
  bottom: 6px;
  width: 28px;
  height: 6px;
  background: #ff0;
}

.format-buttons .mark svg {
  width: 16px;
  height: 24px;
  margin-left: -6px;
}

.info {
  display: flex;
  align-items: center;
  justify-content: space-between;
  flex: none;
  height: 85px;
  margin: 0 2px 2px 3px;
  padding: 0 16px 4px 12px;
  background: #afdaf6;
}

.info dl {
  display: grid;
  grid-template-columns: auto 1fr;
  column-gap: 14px;
}

.info dt {
  text-shadow: 2px 0 #e8e8ea, -2px 0 #e8e8ea, 0 2px #e8e8ea, 0 -2px #e8e8ea;
}

.info .arrow {
  margin-left: 14px;
  border-top-color: #3a6cc8;
  vertical-align: middle;
}

.info .hint {
  color: #9ec3de;
}

.weather {
  width: 66px;
  height: 58px;
}

.body {
  display: flex;
  flex: 1;
  min-height: 0;
  background: #fff;
}

.page {
  flex: 1;
  min-width: 0;
  padding: 30px 36px;
}

.minutes {
  width: 100%;
  border: 4px solid #000;
  border-collapse: collapse;
  table-layout: fixed;
  font-size: 28px;
  line-height: 36px;
  color: #000;
}

.c-label {
  width: 207px;
}

.c-mid {
  width: 191px;
}

.c-value {
  width: 28.600%;
}

.minutes tr {
  height: 53px;
}

.minutes th, .minutes td {
  padding: 0 12px 2px;
  border: solid #000;
  border-width: 2px 1px;
  font-weight: normal;
}

.minutes th {
  padding: 0 0 2px;
  background: #eee;
}

.minutes .title {
  height: 58px;
}

.minutes .title th {
  padding: 0;
  background: #d5d5d5;
  font-family: "Liberation Mono", "Noto Sans CJK SC", monospace;
  font-size: 32px;
  font-weight: bold;
}

.minutes .tall {
  height: 358px;
}

.minutes .decision {
  height: 95px;
}

.minutes .sign {
  height: 56px;
}

/* scrollbars */
.scroll {
  display: flex;
  flex-direction: column;
  flex: none;
  width: 32px;
  background: #f2f0f9;
  color: #4d6185;
}

.scroll button {
  height: 30px;
  background: linear-gradient(to right, #d6e3fe, #b9cdfb);
  border: 2px solid #fff;
  border-radius: 4px;
  box-shadow: inset 0 0 0 1px #a8c0f0;
}

.scroll button:last-child {
  margin-top: auto;
}

.scroll svg {
  width: 20px;
  height: 12px;
}

.scroll.gray {
  color: #a5a4a6;
}

.gray button {
  background: #efeeec;
  box-shadow: inset 0 0 0 1px #dedddb;
}

.handle {
  display: flex;
  align-items: center;
  justify-content: center;
  height: 36%;
  margin-top: 2px;
  background: linear-gradient(to right, #cddcfe, #b9cdfb);
  border: 2px solid #a9c0f2;
  border-radius: 4px;
}

.handle svg {
  width: 14px;
  height: 16px;
}

/* template pane */
.templates {
  display: flex;
  flex-direction: column;
  flex: none;
  width: 235px;
  border-left: 2px solid #c8d4f2;
}

.templates header {
  display: flex;
  align-items: center;
  justify-content: space-between;
  height: 47px;
  padding: 0 15px 2px 12px;
  background: #ccd6f4;
}

.templates header svg {
  width: 18px;
  height: 16px;
}

.tpl-source {
  margin: 7px 8px 9px;
}

.tpl-area {
  display: flex;
  flex: 1;
  min-height: 0;
}

.tpl-list {
  flex: 1;
  overflow: hidden;
}

.tpl-list figure {
  display: flex;
  flex-direction: column;
  align-items: center;
  height: 198px;
  margin: 0 6px;
  padding-top: 10px;
}

.tpl-list .selected {
  background: #b4cdef;
}

.thumb {
  width: 146px;
  height: 147px;
  margin-bottom: 3px;
  background: #fff;
  border: 2px solid #a0a0a0;
  box-shadow: 4px 4px #b8b8b8;
}

.manager {
  height: 44px;
  margin: 15px 10px 11px;
  background: linear-gradient(to bottom, #f2fbff, #dcf1fd 48%, #bfe0fb 52%, #d8f0ff);
  border: 2px solid #8fb0e4;
  border-radius: 6px;
}

/* bottom bars */
.bottombar {
  display: flex;
  align-items: center;
  flex: none;
  height: 44px;
  padding-right: 2px;
  background: #e0e0f5;
  border-top: 2px solid #c0c4ee;
}

.bottombar button {
  align-self: stretch;
}

.bottombar svg {
  width: 28px;
  height: 28px;
}

.attach, .comment {
  width: 124px;
  gap: 25px;
}

.bottombar .attach, .bottombar .comment {
  border-right: 2px solid #c4c4ea;
}

.add-tag {
  gap: 10px;
  padding-left: 11px;
}

.pane {
  gap: 5px;
}

.bottombar .pane svg {
  width: 26px;
}

.add-tag + .pane {
  margin-left: auto;
}

.bottombar .pane.on {
  margin: 2px 0;
  padding: 0 3px 0 6px;
}

.bottombar .sep {
  margin: 2px 8px 2px 13px;
}

.status {
  display: flex;
  flex: none;
  height: 29px;
  padding-top: 3px;
  justify-content: flex-end;
  overflow: hidden;
  background: linear-gradient(to bottom, #ced6f2, #e4e7f8);
}

.status span {
  flex: none;
  text-align: center;
  border-left: 2px solid #a3b8ea;
  white-space: pre;
}

.st-state {
  width: 148px;
}

.st-words {
  width: 227px;
}

.st-pos {
  width: 272px;
  padding-right: 24px;
}

.watermark {
  position: fixed;
  right: 14px;
  bottom: 4px;
  color: #b4b4ba;
  font-size: 20px;
  line-height: 30px;
  text-shadow: 1px 1px 1px #777;
}

/* bottom edge of the window, across the full page */
body::after {
  content: "";
  display: block;
  height: 1px;
  background: #3e9078;
}
```
